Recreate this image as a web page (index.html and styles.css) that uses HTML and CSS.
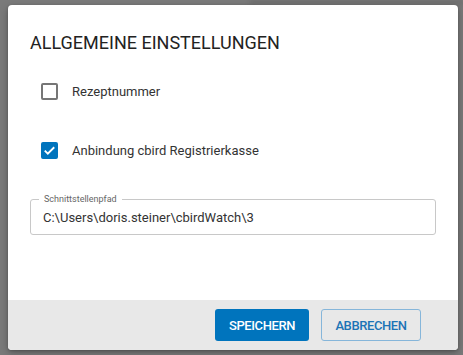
FILE: index.html
```html
<!DOCTYPE html>
<html lang="de">
<head>
<meta charset="utf-8">
<title>Allgemeine Einstellungen</title>
<link rel="stylesheet" href="styles.css">
</head>
<body>
<div class="backdrop">
  <div class="blur-strip"></div>
  <div class="dialog">
    <div class="content">
      <h1 class="title">ALLGEMEINE EINSTELLUNGEN</h1>
      <label class="check-row first">
        <span class="box"></span>
        <span class="check-label">Rezeptnummer</span>
      </label>
      <label class="check-row second">
        <span class="box checked">
          <svg viewBox="0 0 18 18" width="17" height="17"><path d="M4 9.2l3.2 3.2L14 5.6" fill="none" stroke="#fff" stroke-width="2"/></svg>
        </span>
        <span class="check-label">Anbindung cbird Registrierkasse</span>
      </label>
      <div class="field">
        <span class="field-label">Schnittstellenpfad</span>
        <div class="field-value">C:\Users\doris.steiner\cbirdWatch\3</div>
      </div>
    </div>
    <div class="footer">
      <button class="btn primary">SPEICHERN</button>
      <button class="btn secondary">ABBRECHEN</button>
    </div>
  </div>
</div>
</body>
</html>
```

FILE: styles.css
```css
html, body {
  margin: 0;
  padding: 0;
}
body {
  width: 463px;
  height: 355px;
  overflow: hidden;
  background: #7a7a7a;
  font-family: Roboto, "Liberation Sans", sans-serif;
}
.backdrop {
  position: relative;
  width: 463px;
  height: 355px;
  padding: 5px 0 0 8px;
  box-sizing: border-box;
}
.blur-strip {
  position: absolute;
  left: 250px;
  top: 0;
  width: 213px;
  height: 8px;
  background: linear-gradient(to bottom, #6a6a6a, #7a7a7a);
  filter: blur(2px);
}
.dialog {
  position: relative;
  width: 450px;
  height: 345px;
  background: #fff;
  border-radius: 4px;
  overflow: hidden;
  display: flex;
  flex-direction: column;
  box-shadow: 0 3px 8px rgba(0,0,0,0.25), 0 1px 3px rgba(0,0,0,0.2);
}
.content {
  flex: 1;
  padding: 27px 22px 0 22px;
}
.title {
  margin: 0;
  font-size: 18px;
  line-height: 21px;
  font-weight: 400;
  color: #222;
  letter-spacing: 0;
}
.check-row {
  display: flex;
  align-items: center;
  height: 18px;
  padding-left: 11px;
}
.check-row.first {
  margin-top: 29px;
}
.check-row.second {
  margin-top: 41px;
}
.box {
  width: 17px;
  height: 17px;
  box-sizing: border-box;
  border: 2px solid #767676;
  border-radius: 2px;
  display: flex;
  align-items: center;
  justify-content: center;
  flex-shrink: 0;
}
.box.checked {
  background: #0074bd;
  border-color: #0074bd;
}
.box svg {
  display: block;
  flex-shrink: 0;
}
.check-label {
  margin-left: 14px;
  font-size: 13px;
  color: #333;
}
.field {
  position: relative;
  margin-top: 40px;
  height: 36px;
  border: 1px solid #c8c8c8;
  border-radius: 3px;
  box-sizing: border-box;
  display: flex;
  align-items: center;
  padding-left: 12px;
}
.field-label {
  position: absolute;
  left: 8px;
  top: -6px;
  padding: 0 5px;
  background: #fff;
  font-size: 9px;
  line-height: 10px;
  color: #666;
}
.field-value {
  font-size: 13px;
  color: #333;
  margin-top: 1px;
}
.footer {
  height: 50px;
  background: #e8e8e8;
  display: flex;
  align-items: center;
  justify-content: flex-end;
  gap: 12px;
  padding-right: 37px;
}
.btn {
  height: 32px;
  box-sizing: border-box;
  border-radius: 3px;
  font-family: Roboto, "Liberation Sans", sans-serif;
  font-size: 13px;
  font-weight: 500;
  letter-spacing: -0.4px;
  padding: 0;
  cursor: pointer;
}
.btn.primary {
  width: 94px;
  background: #0074bd;
  color: #fff;
  border: none;
}
.btn.secondary {
  width: 100px;
  background: transparent;
  color: #1c74b6;
  border: 1px solid #86b6da;
}
```
